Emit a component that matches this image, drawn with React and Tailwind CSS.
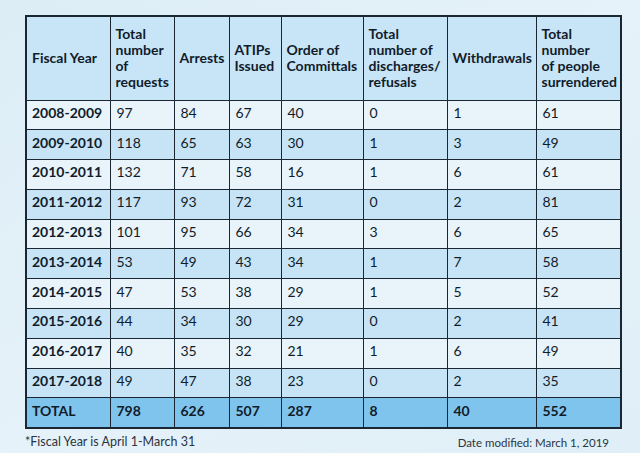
import React from 'react';

const rows = [
  ['2008-2009', 97, 84, 67, 40, 0, 1, 61],
  ['2009-2010', 118, 65, 63, 30, 1, 3, 49],
  ['2010-2011', 132, 71, 58, 16, 1, 6, 61],
  ['2011-2012', 117, 93, 72, 31, 0, 2, 81],
  ['2012-2013', 101, 95, 66, 34, 3, 6, 65],
  ['2013-2014', 53, 49, 43, 34, 1, 7, 58],
  ['2014-2015', 47, 53, 38, 29, 1, 5, 52],
  ['2015-2016', 44, 34, 30, 29, 0, 2, 41],
  ['2016-2017', 40, 35, 32, 21, 1, 6, 49],
  ['2017-2018', 49, 47, 38, 23, 0, 2, 35],
];

const totals = ['TOTAL', 798, 626, 507, 287, 8, 40, 552];

const widths = [84, 64, 55, 52, 82, 84, 89, 85];

const headers = [
  'Fiscal Year',
  <>Total<br />number<br />of<br />requests</>,
  'Arrests',
  <>ATIPs<br />Issued</>,
  <>Order of<br />Committals</>,
  <>Total<br />number of<br />discharges/<br />refusals</>,
  'Withdrawals',
  <>Total<br />number<br />of people<br />surrendered</>,
];

export default function App() {
  return (
    <div
      className="w-[640px] h-[453px] bg-gradient-to-br from-[#dcedf6] via-[#e6f2f9] to-[#dfeef7] text-[#111c2b] overflow-hidden"
      style={{ fontFamily: 'Lato, "Open Sans", sans-serif' }}
    >
      <div className="pt-[15px] px-[25px]">
        <table className="table-fixed border-collapse w-[595px] border-2 border-[#1a2733]">
          <colgroup>
            {widths.map((w, i) => (
              <col key={i} style={{ width: w }} />
            ))}
          </colgroup>
          <thead>
            <tr className="h-[84px] bg-[#c8e5f7]">
              {headers.map((h, i) => (
                <th
                  key={i}
                  className="border-[1.5px] border-[#1a2733] px-[5px] text-left align-middle font-bold text-[14px] leading-[16px] whitespace-nowrap"
                >
                  {h}
                </th>
              ))}
            </tr>
          </thead>
          <tbody>
            {rows.map((r, ri) => (
              <tr
                key={r[0]}
                className={ri % 2 === 0 ? 'h-[29.8px] bg-[#e8f3fa]' : 'h-[29.8px] bg-[#c6e4f6]'}
              >
                {r.map((c, ci) => (
                  <td
                    key={ci}
                    className={
                      ci === 0
                        ? 'border-[1.5px] border-[#1a2733] px-[5px] pb-[5px] font-bold text-[14px]'
                        : 'border-[1.5px] border-[#1a2733] px-[6px] pb-[5px] text-[14px]'
                    }
                  >
                    {c}
                  </td>
                ))}
              </tr>
            ))}
            <tr className="h-[30px] bg-[#7fc4ec]">
              {totals.map((c, ci) => (
                <td
                  key={ci}
                  className={
                    ci === 0
                      ? 'border-[1.5px] border-[#1a2733] px-[5px] pb-[5px] font-bold text-[14px]'
                      : 'border-[1.5px] border-[#1a2733] px-[6px] pb-[5px] font-bold text-[14px]'
                  }
                >
                  {c}
                </td>
              ))}
            </tr>
          </tbody>
        </table>
        <div className="flex justify-between items-center mt-[4px] text-[#2b3440]">
          <span className="text-[12.5px]">*Fiscal Year is April 1-March 31</span>
          <span className="text-[11.5px] pr-[6px]">Date modified: March 1, 2019</span>
        </div>
      </div>
    </div>
  );
}
